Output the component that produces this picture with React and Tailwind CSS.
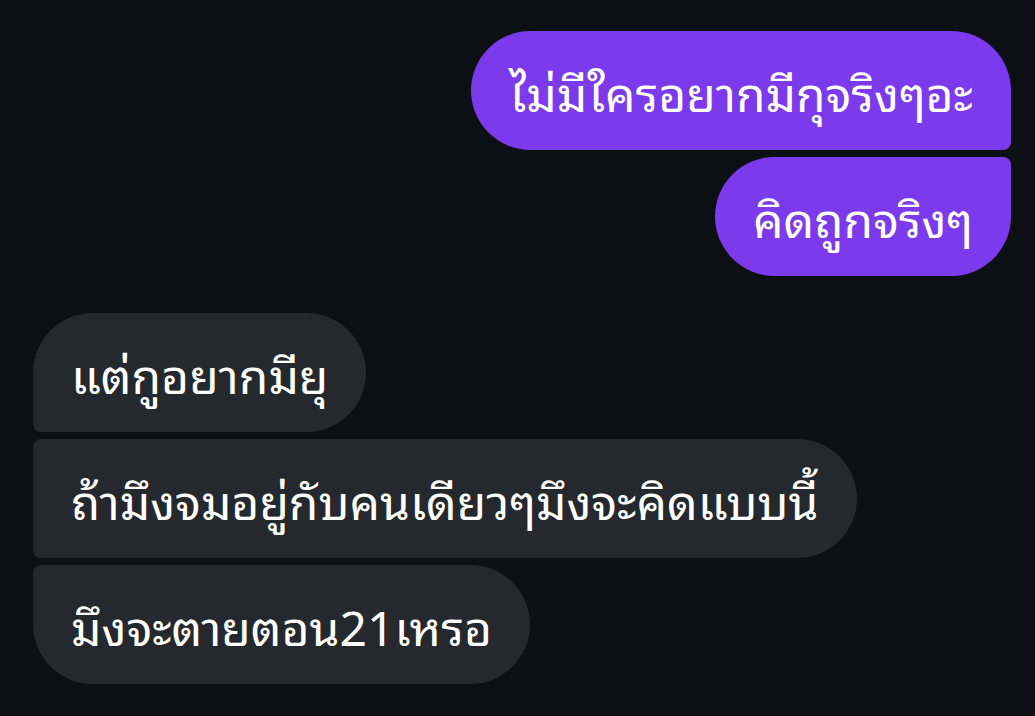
import React from "react";

const sent = [
  { text: "ไม่มีใครอยากมีกุจริงๆอะ", shape: "rounded-[60px] rounded-br-[8px]" },
  { text: "คิดถูกจริงๆ", shape: "rounded-[60px] rounded-tr-[8px]" },
];

const received = [
  { text: "แต่กูอยากมียุ", shape: "rounded-[60px] rounded-bl-[8px]" },
  { text: "ถ้ามึงจมอยู่กับคนเดียวๆมึงจะคิดแบบนี้", shape: "rounded-[60px] rounded-tl-[8px] rounded-bl-[8px]" },
  { text: "มึงจะตายตอน21เหรอ", shape: "rounded-[60px] rounded-tl-[8px]" },
];

const Bubble = ({ text, shape, mine }) => (
  <div
    className={`h-[119px] flex items-center px-[38px] text-[48px] leading-none whitespace-nowrap text-white ${shape} ${
      mine ? "bg-[#7c3aed]" : "bg-[#25282c]"
    }`}
  >
    {text}
  </div>
);

export default function App() {
  return (
    <div className="w-[1035px] h-[716px] bg-[#0c0f13] overflow-hidden flex flex-col font-['Noto_Sans_Thai_Looped','Noto_Sans',sans-serif]">
      {/* Outgoing */}
      <div className="flex flex-col items-end gap-[7px] pt-[31px] pr-[24px]">
        {sent.map((m) => (
          <Bubble key={m.text} {...m} mine />
        ))}
      </div>

      {/* Incoming */}
      <div className="flex flex-col items-start gap-[7px] pt-[37px] pl-[33px]">
        {received.map((m) => (
          <Bubble key={m.text} {...m} />
        ))}
      </div>
    </div>
  );
}
